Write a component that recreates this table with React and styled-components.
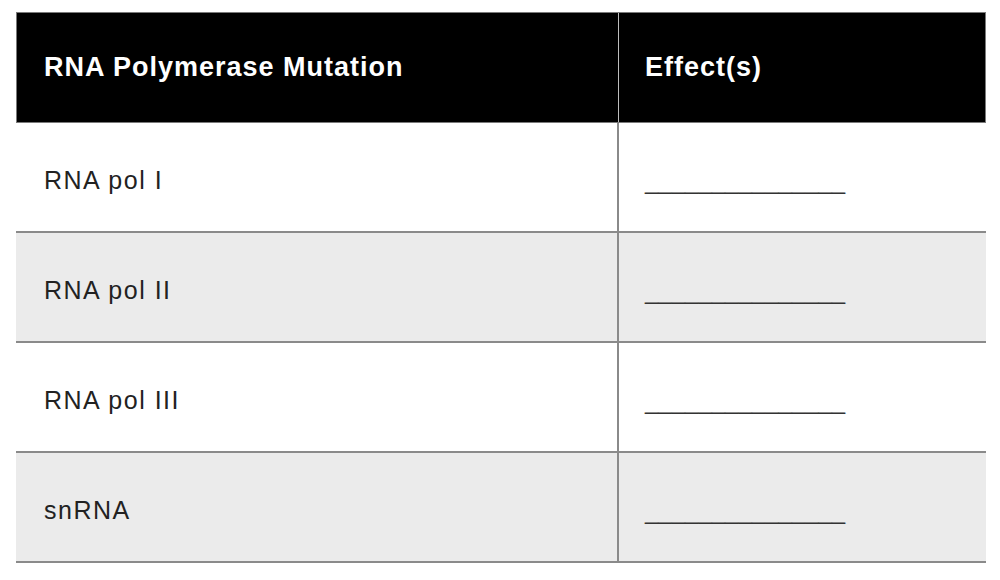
import React from "react";
import styled, { createGlobalStyle } from "styled-components";

const Global = createGlobalStyle`
  html, body { margin: 0; padding: 0; background: #ffffff; }
  body { font-family: "Liberation Sans", Arial, sans-serif; }
`;

const Page = styled.div`
  padding: 12px 14px 0 16px;
`;

const Table = styled.div`
  width: 970px;
  display: flex;
  flex-direction: column;
`;

const HeaderRow = styled.div`
  display: grid;
  grid-template-columns: 602px 1fr;
  height: 111px;
  box-sizing: border-box;
  background: #000;
  border: 1px solid #7a7a7a;
`;

const HeaderCell = styled.div`
  display: flex;
  align-items: center;
  padding-left: ${(p) => (p.$first ? "27px" : "26px")};
  color: #fff;
  font-weight: 700;
  font-size: 27px;
  letter-spacing: 1px;
  border-right: ${(p) => (p.$first ? "1px solid #bdbdbd" : "none")};
`;

const Row = styled.div`
  display: grid;
  grid-template-columns: 603px 1fr;
  height: 110px;
  box-sizing: border-box;
  background: ${(p) => (p.$shaded ? "#ebebeb" : "#ffffff")};
  border-bottom: 2px solid #8a8a8a;
`;

const Cell = styled.div`
  display: flex;
  align-items: center;
  padding-left: ${(p) => (p.$first ? "28px" : "26px")};
  padding-top: 6px;
  color: #222;
  font-size: 25px;
  letter-spacing: 1.5px;
  border-right: ${(p) => (p.$first ? "2px solid #8a8a8a" : "none")};
`;

const Blank = styled.span`
  font-size: 24px;
  letter-spacing: 0;
  color: #333;
  padding-top: 2px;
`;

const rows = ["RNA pol I", "RNA pol II", "RNA pol III", "snRNA"];

export default function App() {
  return (
    <>
      <Global />
      <Page>
        <Table>
          <HeaderRow>
            <HeaderCell $first>RNA Polymerase Mutation</HeaderCell>
            <HeaderCell>Effect(s)</HeaderCell>
          </HeaderRow>
          {rows.map((r, i) => (
            <Row key={r} $shaded={i % 2 === 1}>
              <Cell $first>{r}</Cell>
              <Cell>
                <Blank>_______________</Blank>
              </Cell>
            </Row>
          ))}
        </Table>
      </Page>
    </>
  );
}
